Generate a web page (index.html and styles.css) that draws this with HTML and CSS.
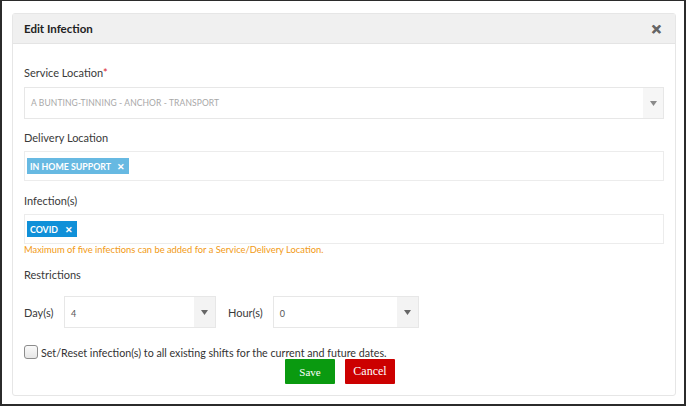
FILE: index.html
```html
<!DOCTYPE html>
<html>
<head>
<meta charset="utf-8">
<link rel="stylesheet" href="styles.css">
</head>
<body>
<div class="frame">
  <div class="dialog">
    <div class="dialog-header">
      <span class="title">Edit Infection</span>
      <span class="close">&#x2715;</span>
    </div>
    <div class="dialog-body">
      <div class="label label-first">Service Location<span class="req">*</span></div>
      <div class="select select-wide">
        <span class="select-text">A BUNTING-TINNING - ANCHOR - TRANSPORT</span>
        <span class="arrow"><svg width="7" height="5" viewBox="0 0 7 5"><path d="M0 0H7L3.5 5Z" fill="#8a8a8a"/></svg></span>
      </div>
      <div class="label label-tight">Delivery Location</div>
      <div class="tagbox">
        <span class="tag tag-light">IN HOME SUPPORT <span class="tag-x">&#x2715;</span></span>
      </div>
      <div class="label">Infection(s)</div>
      <div class="tagbox">
        <span class="tag tag-dark">COVID <span class="tag-x">&#x2715;</span></span>
      </div>
      <div class="warning">Maximum of five infections can be added for a Service/Delivery Location.</div>
      <div class="label label-restr">Restrictions</div>
      <div class="restr-row">
        <span class="row-label">Day(s)</span>
        <div class="select select-small select-day">
          <span class="select-val">4</span>
          <span class="arrow arrow-small"><svg width="7" height="5" viewBox="0 0 7 5"><path d="M0 0H7L3.5 5Z" fill="#666"/></svg></span>
        </div>
        <span class="row-label row-label-hour">Hour(s)</span>
        <div class="select select-small select-hour">
          <span class="select-val">0</span>
          <span class="arrow arrow-small"><svg width="7" height="5" viewBox="0 0 7 5"><path d="M0 0H7L3.5 5Z" fill="#666"/></svg></span>
        </div>
      </div>
      <label class="check-row">
        <span class="checkbox"></span>
        <span class="check-text">Set/Reset infection(s) to all existing shifts for the current and future dates.</span>
      </label>
      <div class="buttons">
        <button class="btn btn-save">Save</button>
        <button class="btn btn-cancel">Cancel</button>
      </div>
    </div>
  </div>
</div>
</body>
</html>
```
FILE: styles.css
```css
html, body {
  margin: 0;
  padding: 0;
  background: #ffffff;
}
body {
  font-family: Lato, "Open Sans", sans-serif;
  color: #444;
  width: 688px;
  height: 408px;
  overflow: hidden;
}
.frame {
  box-sizing: border-box;
  width: 686px;
  height: 406px;
  border-top: 1px solid #2b2b2b;
  border-left: 2px solid #2b2b2b;
  border-right: 2px solid #2b2b2b;
  border-bottom: 2px solid #2b2b2b;
  padding: 12px 0 0 10px;
  background: #fff;
}
.dialog {
  box-sizing: border-box;
  width: 664px;
  height: 383px;
  border: 1px solid #e6e6e6;
  border-radius: 3px;
  background: #fff;
}
.dialog-header {
  height: 30px;
  background: #f0f0f0;
  border-bottom: 1px solid #e4e4e4;
  display: flex;
  align-items: center;
  justify-content: space-between;
  padding: 0 13px 0 11px;
  box-sizing: border-box;
}
.title {
  font-weight: 700;
  font-size: 11.5px;
  color: #222;
}
.close {
  font-size: 13px;
  font-weight: 700;
  color: #666;
  -webkit-text-stroke: 0.6px #666;
}
.dialog-body {
  padding: 21px 11px 0 11px;
}
.label {
  font-size: 11px;
  line-height: 16px;
  height: 16px;
  color: #3a3a3a;
  margin-top: 12px;
  margin-bottom: 5px;
}
.label-first {
  margin-top: 0;
  margin-bottom: 6px;
}
.label-tight {
  margin-top: 11px;
}
.req {
  color: #d9232d;
}
.select {
  box-sizing: border-box;
  border: 1px solid #e7e7e7;
  display: flex;
  align-items: center;
  background: #fff;
}
.select-wide {
  width: 640px;
  height: 32px;
}
.select-text {
  flex: 1;
  padding-left: 6px;
  font-size: 8.5px;
  color: #a8a8a8;
  letter-spacing: 0.1px;
}
.arrow {
  width: 20px;
  height: 100%;
  background: #f6f6f6;
  display: flex;
  align-items: center;
  justify-content: center;
}
.tagbox {
  box-sizing: border-box;
  width: 640px;
  height: 30px;
  border: 1px solid #ececec;
  display: flex;
  align-items: center;
  padding-left: 2px;
}
.tag {
  display: inline-flex;
  align-items: center;
  height: 16px;
  padding: 0 4px 0 3px;
  color: #fff;
  font-size: 8.8px;
  font-weight: 700;
}
.tag-light {
  background: #67b9e2;
  width: 102px;
  box-sizing: border-box;
  justify-content: space-between;
}
.tag-dark {
  background: #1090d8;
  width: 50px;
  box-sizing: border-box;
  justify-content: space-between;
}
.tag-x {
  font-size: 9px;
  font-weight: 700;
}
.warning {
  font-size: 9.35px;
  line-height: 12px;
  color: #f29a14;
  margin-top: 0;
}
.label-restr {
  margin-top: 11px;
  margin-bottom: 13px;
}
.restr-row {
  display: flex;
  align-items: center;
  height: 32px;
}
.row-label {
  font-size: 11px;
  color: #3a3a3a;
  width: 40px;
}
.row-label-hour {
  width: auto;
  margin-left: 12px;
  margin-right: 10px;
}
.select-small {
  height: 32px;
}
.select-day {
  width: 152px;
}
.select-hour {
  width: 146px;
}
.select-val {
  flex: 1;
  padding-left: 6px;
  font-size: 9px;
  color: #555;
  padding-top: 3px;
}
.arrow-small {
  width: 21px;
  background: #f3f3f3;
}
.check-row {
  display: flex;
  align-items: center;
  margin-top: 16px;
  height: 16px;
}
.checkbox {
  box-sizing: border-box;
  width: 14px;
  height: 14px;
  border: 1px solid #8c8c8c;
  border-radius: 3px;
  background: linear-gradient(#fafafa, #e6e6e6);
  margin-right: 3px;
}
.check-text {
  font-size: 10.7px;
  color: #333;
}
.buttons {
  display: flex;
  gap: 10px;
  margin-top: -1px;
  padding-left: 261px;
}
.btn {
  width: 50px;
  height: 25px;
  border: none;
  border-radius: 1px;
  color: #fff;
  font-family: "Liberation Serif", serif;
  font-size: 11px;
  padding: 0;
}
.btn-save {
  background: #0a9a10;
}
.btn-cancel {
  background: #cc0000;
  font-size: 12px;
}
```
